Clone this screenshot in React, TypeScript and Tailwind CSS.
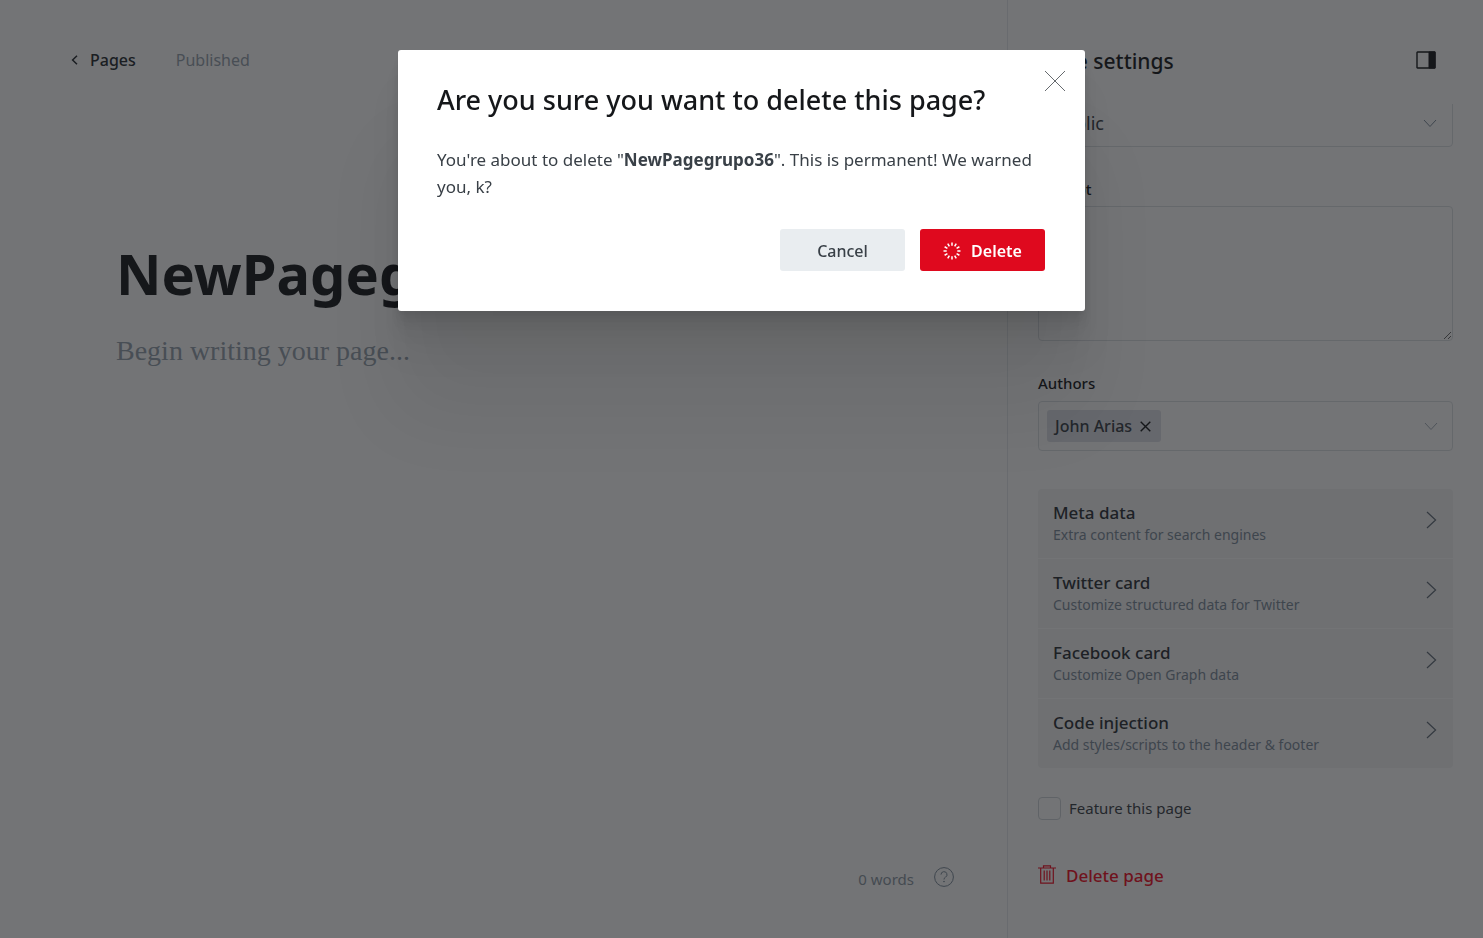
import React from 'react';

const sections = [
  { title: 'Meta data', text: 'Extra content for search engines' },
  { title: 'Twitter card', text: 'Customize structured data for Twitter' },
  { title: 'Facebook card', text: 'Customize Open Graph data' },
  { title: 'Code injection', text: 'Add styles/scripts to the header & footer' },
];

function Chevron({ className }: { className: string }) {
  return (
    <svg className={className} width="14" height="9" viewBox="0 0 14 9" fill="none" stroke="currentColor" aria-hidden="true">
      <path d="M1 1l6 6.5L13 1" />
    </svg>
  );
}

function Spinner() {
  const angles = [0, 30, 60, 90, 120, 150, 180, 210, 240, 270, 300, 330];
  return (
    <svg width="18" height="18" viewBox="0 0 18 18" stroke="#fff" strokeWidth="1.5" aria-hidden="true">
      {angles.map((a) => (
        <path key={a} d="M9 0.5v3.2" transform={`rotate(${a} 9 9)`} />
      ))}
    </svg>
  );
}

function Editor() {
  return (
    <main className="flex min-w-0 flex-1 flex-col">
      <header className="flex h-[120px] items-center gap-10 pl-[71px] text-[16px] leading-6">
        <a href="#pages" className="flex items-center gap-3 font-medium text-[#23282d]">
          <svg width="7" height="10" viewBox="0 0 7 10" fill="none" stroke="currentColor" strokeWidth="1.5" aria-hidden="true">
            <path d="M6 0.8L1.6 5L6 9.2" />
          </svg>
          Pages
        </a>
        <span className="text-[#95a1ad]">Published</span>
      </header>
      <div className="flex flex-1 flex-col px-[116px] pt-[109px]">
        <input
          aria-label="Page title"
          defaultValue="NewPagegrupo36"
          className="h-[88px] w-full bg-transparent text-[56px] font-bold text-[#15171a] outline-none"
        />
        <textarea
          aria-label="Page content"
          placeholder="Begin writing your page..."
          className="mt-[14px] flex-1 resize-none bg-transparent font-['Liberation_Serif',serif] text-[28px] leading-[40px] outline-none placeholder:text-[#95a1ad]"
        />
      </div>
      <footer className="flex h-[118px] items-center justify-end gap-5 pr-[53px] text-[15px] text-[#8c98a4]">
        <span>0 words</span>
        <a href="#help" aria-label="Help" className="pb-1 text-[#7c8b9a]">
          <svg width="20" height="20" viewBox="0 0 20 20" fill="none" stroke="currentColor" aria-hidden="true">
            <circle cx="10" cy="10" r="9.4" />
            <path d="M7 7.6a3 3 0 1 1 4.4 2.7c-.9.5-1.4 1-1.4 2.2" />
            <circle cx="10" cy="14.6" r="0.4" fill="currentColor" />
          </svg>
        </a>
      </footer>
    </main>
  );
}

function Settings() {
  return (
    <aside className="flex w-[476px] flex-col border-l border-[#e5e9ed] px-[30px] text-[15px] text-[#15171a]">
      <div className="flex h-[104px] shrink-0 items-center justify-between pt-5 pr-[17px]">
        <h2 className="text-[21px] font-medium">Page settings</h2>
        <button type="button" aria-label="Toggle settings" className="pb-1">
          <svg width="20" height="18" viewBox="0 0 20 18" fill="none" stroke="currentColor" aria-hidden="true">
            <rect x="1" y="1" width="18" height="16" rx="0.5" strokeWidth="1.4" />
            <path d="M13 1h6v16h-6z" fill="currentColor" />
          </svg>
        </button>
      </div>
      <div className="flex h-[43px] shrink-0 flex-col justify-end overflow-hidden">
        <div className="relative shrink-0">
          <select aria-label="Page access" className="h-[49px] w-full appearance-none rounded border border-[#dce0e4] px-[14px] pt-px text-[18px] text-[#394047]">
            <option>Public</option>
          </select>
          <Chevron className="pointer-events-none absolute top-[21px] right-4 text-[#7c8b9a]" />
        </div>
      </div>
      <label htmlFor="excerpt" className="mt-8 text-[15px] leading-5 font-medium">Excerpt</label>
      <textarea id="excerpt" className="mt-[7px] h-[135px] shrink-0 rounded border border-[#dce0e4] p-3" />
      <span className="mt-8 text-[15px] leading-5 font-medium">Authors</span>
      <div className="mt-2 flex h-[50px] shrink-0 items-center justify-between rounded border border-[#dce0e4] pr-[14px] pl-2">
        <span className="flex h-8 items-center gap-2 rounded-[3px] bg-[#dfe1e8] px-2 pr-[10px] text-[16px] font-medium text-[#394047]">
          John Arias
          <button type="button" aria-label="Remove John Arias">
            <svg width="11" height="11" viewBox="0 0 11 11" fill="none" stroke="#15171a" strokeWidth="1.4" aria-hidden="true">
              <path d="M0.7 0.7l9.6 9.6M10.3 0.7l-9.6 9.6" />
            </svg>
          </button>
        </span>
        <Chevron className="text-[#a4aeb9]" />
      </div>
      <ul className="mt-[38px] shrink-0 divide-y divide-white overflow-hidden rounded bg-[#f4f5f6]">
        {sections.map((s) => (
          <li key={s.title}>
            <button type="button" className="flex h-[69px] w-full items-center justify-between pr-4 pb-[2px] pl-[15px] text-left">
              <span className="flex flex-col">
                <span className="text-[17px] leading-6 font-medium text-[#2b3036]">{s.title}</span>
                <span className="text-[14px] leading-5 text-[#7c8b9a]">{s.text}</span>
              </span>
              <svg className="mb-[6px]" width="11" height="18" viewBox="0 0 11 18" fill="none" stroke="#626d79" strokeWidth="1.2" aria-hidden="true">
                <path d="M1 1l8.6 8L1 17" />
              </svg>
            </button>
          </li>
        ))}
      </ul>
      <label className="mt-7 flex items-center gap-2 leading-6 text-[#394047]">
        <input type="checkbox" className="size-[23px] appearance-none rounded border border-[#cfd5da]" />
        Feature this page
      </label>
      <button type="button" className="mt-11 flex items-center gap-[10px] self-start text-[17px] leading-6 font-medium text-[#f50b23]">
        <svg width="18" height="19" viewBox="0 0 18 19" className="mb-1" fill="none" stroke="currentColor" strokeWidth="1.2" aria-hidden="true">
          <path d="M0 3h18M5.5 3V0.8h7V3M2.7 3v15.2h12.6V3M6.2 5.5v10M9 5.5v10M11.8 5.5v10" />
        </svg>
        Delete page
      </button>
    </aside>
  );
}

function DeleteDialog() {
  return (
    <div className="fixed inset-0 flex items-start justify-center bg-[#15171a]/60 pt-[50px]">
      <div
        role="dialog"
        aria-modal="true"
        aria-labelledby="dialog-title"
        className="relative w-full max-w-[687px] rounded-[3px] bg-white px-[39px] pt-8 pb-10 shadow-[0_3px_3px_rgba(0,0,0,0.02),0_7px_6px_rgba(0,0,0,0.03),0_13px_10px_rgba(0,0,0,0.04),0_22px_18px_rgba(0,0,0,0.04),0_42px_34px_rgba(0,0,0,0.05),0_100px_80px_rgba(0,0,0,0.07)]"
      >
        <h1 id="dialog-title" className="text-[27px] leading-9 font-medium text-[#15171a]">
          Are you sure you want to delete this page?
        </h1>
        <p className="mt-7 text-[17px] leading-[27px] text-[#394047]">
          You're about to delete "<strong className="font-bold">NewPagegrupo36</strong>". This is permanent! We warned you, k?
        </p>
        <div className="mt-[29px] mr-px flex justify-end gap-[15px]">
          <button type="button" className="h-[42px] w-[125px] rounded-[3px] bg-[#e9edf0] pt-[2px] text-[16px] font-medium text-[#394047]">
            Cancel
          </button>
          <button type="button" className="flex h-[42px] w-[125px] items-center justify-center gap-[10px] rounded-[3px] bg-[#df091e] pt-px text-[16px] font-semibold text-white">
            <Spinner />
            Delete
          </button>
        </div>
        <button type="button" aria-label="Close" className="absolute top-5 right-5">
          <svg width="20" height="22" viewBox="0 0 20 22" fill="none" stroke="#666a6e" aria-hidden="true">
            <path d="M0 1l20 20M20 1L0 21" />
          </svg>
        </button>
      </div>
    </div>
  );
}

export default function App() {
  return (
    <div className="flex min-h-screen bg-white font-['Noto_Sans',sans-serif]">
      <Editor />
      <Settings />
      <DeleteDialog />
    </div>
  );
}
